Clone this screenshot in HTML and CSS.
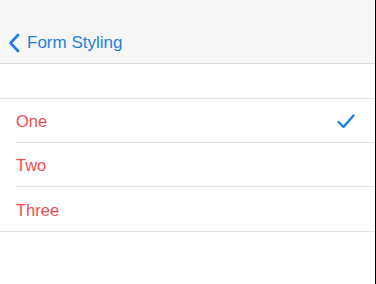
FILE: index.html
```html
<!DOCTYPE html>
<html>
<head>
<meta charset="utf-8">
<link rel="stylesheet" href="styles.css">
</head>
<body>
<div class="screen">
  <header class="nav">
    <a class="back">
      <svg class="chev" width="12" height="20" viewBox="0 0 12 20"><path d="M10 2 L2.5 10 L10 18" fill="none" stroke="currentColor" stroke-width="2.6" stroke-linecap="round" stroke-linejoin="round"/></svg>
      <span>Form Styling</span>
    </a>
  </header>
  <div class="spacer"></div>
  <ul class="list">
    <li class="row"><span class="label">One</span>
      <svg class="check" width="18" height="15" viewBox="0 0 18 15"><path d="M1.5 8 L6.5 13 L16.5 1.5" fill="none" stroke="currentColor" stroke-width="2.4" stroke-linecap="round" stroke-linejoin="round"/></svg>
    </li>
    <li class="row"><span class="label">Two</span></li>
    <li class="row"><span class="label">Three</span></li>
  </ul>
</div>
</body>
</html>
```
FILE: styles.css
```css
html, body {
  margin: 0;
  padding: 0;
  background: #fff;
}
body {
  font-family: "Liberation Sans", Arial, sans-serif;
}
.screen {
  width: 375px;
  height: 284px;
  border-right: 1px solid #000;
  background: #fff;
}
.nav {
  height: 64px;
  box-sizing: border-box;
  background: #f6f6f6;
  border-bottom: 1px solid #d9d9d9;
  display: flex;
  align-items: flex-end;
}
.back {
  display: flex;
  align-items: center;
  gap: 7px;
  color: #1f7fe0;
  font-size: 17px;
  height: 44px;
  padding-left: 8px;
  padding-top: 3px;
  box-sizing: border-box;
}
.chev {
  display: block;
}
.spacer {
  height: 34px;
}
.list {
  list-style: none;
  margin: 0;
  padding: 0 0 0 16px;
  border-top: 1px solid #e2e2e2;
  border-bottom: 1px solid #e2e2e2;
}
.row {
  height: 44px;
  box-sizing: border-box;
  display: flex;
  align-items: center;
  justify-content: space-between;
  padding-right: 20px;
  padding-top: 2px;
  border-bottom: 1px solid #e2e2e2;
  color: #ef4c51;
  font-size: 16.5px;
}
.row:last-child {
  border-bottom: none;
}
.check {
  color: #1f7fe0;
  display: block;
}
```
